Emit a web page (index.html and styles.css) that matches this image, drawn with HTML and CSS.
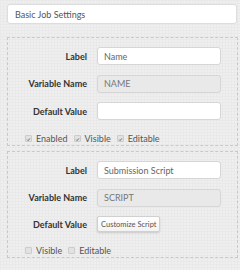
FILE: index.html
```html
<!DOCTYPE html>
<html lang="en">
<head>
  <meta charset="UTF-8" />
  <meta name="viewport" content="width=device-width, initial-scale=1.0"/>
  <title>Job Settings</title>
  <link rel="stylesheet" href="styles.css">
</head>
<body>
  <div class="page">
    <input class="title-input" type="text" value="Basic Job Settings">

    <div class="param">
      <div class="fields">
        <label class="field-label">Label</label>
        <input class="field" type="text" value="Name">
        <label class="field-label">Variable Name</label>
        <input class="field" type="text" value="NAME" disabled>
        <label class="field-label">Default Value</label>
        <input class="field" type="text" value="">
      </div>
      <div class="flags">
        <label class="flag"><span class="box checked"><svg viewBox="0 0 8 8"><path d="M1.8 4.2 L3.3 5.7 L6.2 2.3"/></svg></span>Enabled</label>
        <label class="flag"><span class="box checked"><svg viewBox="0 0 8 8"><path d="M1.8 4.2 L3.3 5.7 L6.2 2.3"/></svg></span>Visible</label>
        <label class="flag"><span class="box checked"><svg viewBox="0 0 8 8"><path d="M1.8 4.2 L3.3 5.7 L6.2 2.3"/></svg></span>Editable</label>
      </div>
    </div>

    <div class="param">
      <div class="fields">
        <label class="field-label">Label</label>
        <input class="field" type="text" value="Submission Script">
        <label class="field-label">Variable Name</label>
        <input class="field" type="text" value="SCRIPT" disabled>
        <label class="field-label">Default Value</label>
        <div class="btn-cell"><button class="btn">Customize Script</button></div>
      </div>
      <div class="flags">
        <label class="flag"><span class="box"></span>Visible</label>
        <label class="flag"><span class="box"></span>Editable</label>
      </div>
    </div>
  </div>
</body>
</html>
```

FILE: styles.css
```css
body {
  margin: 0;
  font-family: Lato, "Open Sans", sans-serif;
  background-color: #efefef;
  background-image:
    linear-gradient(to right, #e9e9e9 1px, transparent 1px),
    linear-gradient(to bottom, #e9e9e9 1px, transparent 1px);
  background-size: 3px 3px;
  color: #333;
}

.page {
  width: 231px;
  padding: 4px 0 0 7px;
}

input {
  font-family: inherit;
  box-sizing: border-box;
  outline: none;
}

.title-input {
  display: block;
  width: 230px;
  height: 20px;
  padding: 0 7px;
  border: 1px solid #ddd;
  border-radius: 3px;
  background: #fff;
  font-size: 9px;
  color: #555;
  margin-bottom: 13px;
}

.param {
  border: 1px dashed #c9c9c9;
  padding: 9px 0 2px 0;
  margin-bottom: 5px;
}

.fields {
  display: grid;
  grid-template-columns: 79px 124px;
  column-gap: 10px;
  row-gap: 9.5px;
  align-items: center;
}

.field-label {
  text-align: right;
  font-size: 9px;
  font-weight: bold;
  color: #333;
}

.field {
  width: 124px;
  height: 18px;
  padding: 0 6px;
  border: 1px solid #d6d6d6;
  border-radius: 3px;
  background: #fff;
  font-size: 9px;
  color: #666;
}

.field:disabled {
  background: #e9e9e9;
  color: #777;
}

.btn-cell {
  display: flex;
}

.btn {
  height: 16px;
  padding: 0 3px;
  border: 1px solid #d0d0d0;
  border-radius: 2px;
  background: linear-gradient(#fff, #f3f3f3);
  box-shadow: 0 1px 2px rgba(0, 0, 0, 0.15);
  font-family: inherit;
  font-size: 7.5px;
  color: #555;
}

.flags {
  display: flex;
  gap: 6px;
  padding-left: 17px;
  margin-top: 13px;
  height: 10px;
  align-items: center;
}

.flag {
  display: flex;
  align-items: center;
  gap: 4px;
  font-size: 9px;
  color: #555;
}

.box {
  width: 7px;
  height: 7px;
  box-sizing: border-box;
  border: 1px solid #ccc;
  border-radius: 1px;
  background: #e2e2e2;
  display: flex;
}

.box svg {
  width: 7px;
  height: 7px;
  fill: none;
  stroke: #444;
  stroke-width: 1.2;
}
```
